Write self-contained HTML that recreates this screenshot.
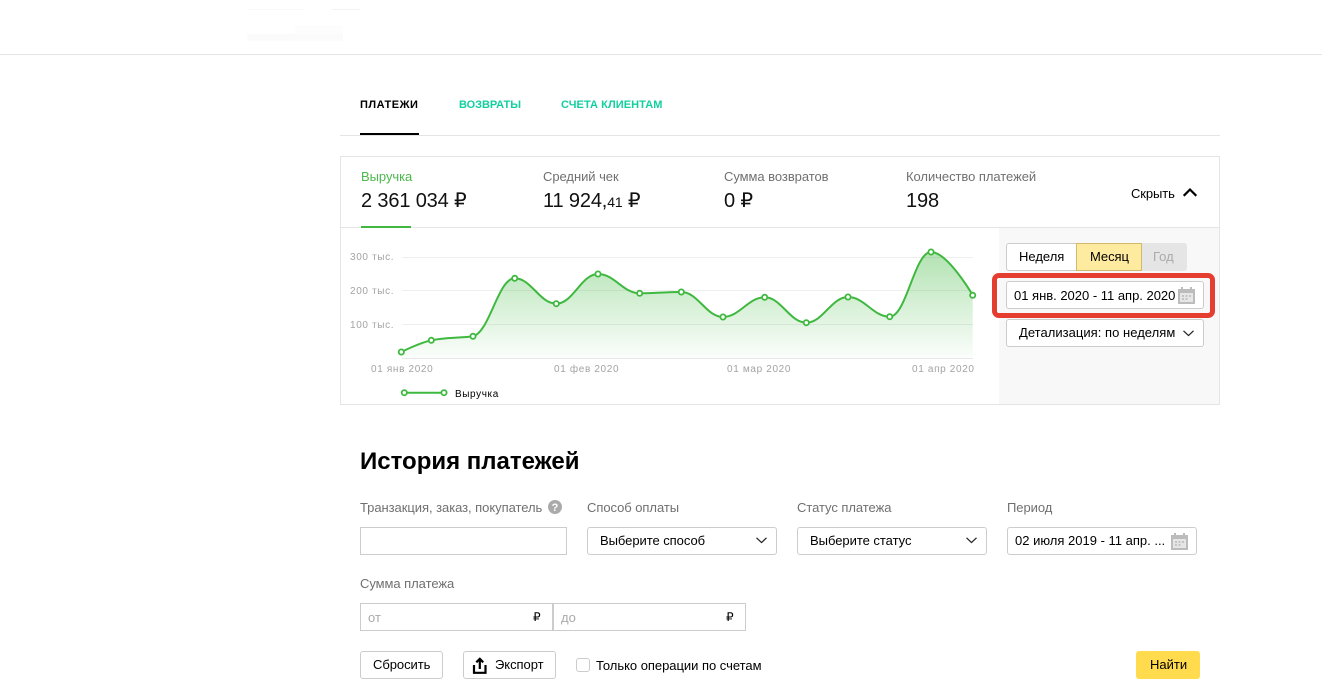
<!DOCTYPE html>
<html lang="ru"><head><meta charset="utf-8"><title>Платежи</title>
<style>
html,body{margin:0;padding:0;background:#fff;width:1322px;height:686px;overflow:hidden;font-family:"Liberation Sans",Arial,sans-serif;color:#000}
.a{position:absolute;box-sizing:border-box}
.t{position:absolute;white-space:nowrap;line-height:16px;font-size:13px}
.l{color:#707070;letter-spacing:-.05px}
.v{font-size:20px;line-height:24px;color:#111;letter-spacing:-.15px}
.b{position:absolute;box-sizing:border-box;background:#fff;border:1px solid #ccc;border-radius:3px}
.tab{font-weight:bold;font-size:11px}
.g{color:#12cfa0}
.cl{color:#a3a3a3;font-size:10px;letter-spacing:.65px}
svg{position:absolute;overflow:visible}
</style></head><body>
<div class="a" style="left:247px;top:9px;width:58px;height:1px;background:#f8f8f8"></div>
<div class="a" style="left:332px;top:9px;width:28px;height:1px;background:#f3f3f3"></div>
<div class="a" style="left:295px;top:25px;width:48px;height:16px;background:#fdfdfd"></div>
<div class="a" style="left:247px;top:34px;width:96px;height:7px;background:#fbfbfb"></div>
<div class="a" style="left:0;top:54px;width:1322px;height:1px;background:#e5e5e5"></div>

<div class="t tab" style="left:360px;top:97px;letter-spacing:.5px">ПЛАТЕЖИ</div>
<div class="t tab g" style="left:459px;top:97px;letter-spacing:-.05px">ВОЗВРАТЫ</div>
<div class="t tab g" style="left:561px;top:97px;letter-spacing:.07px">СЧЕТА КЛИЕНТАМ</div>
<div class="a" style="left:340px;top:135px;width:880px;height:1px;background:#e5e5e5"></div>
<div class="a" style="left:360px;top:133px;width:59px;height:2px;background:#000"></div>

<div class="a" style="left:340px;top:156px;width:880px;height:249px;border:1px solid #e5e5e5"></div>
<div class="a" style="left:341px;top:227px;width:878px;height:1px;background:#e5e5e5"></div>
<div class="a" style="left:999px;top:228px;width:220px;height:176px;background:#f8f8f8"></div>
<div class="a" style="left:361px;top:226px;width:50px;height:2px;background:#3fb83f"></div>

<div class="t" style="left:361px;top:169px;color:#4cb84c;letter-spacing:-.05px">Выручка</div>
<div class="t v" style="left:361px;top:189px">2 361 034 ₽</div>
<div class="t l" style="left:543px;top:169px">Средний чек</div>
<div class="t v" style="left:543px;top:189px">11 924,<span style="font-size:14px">41</span> ₽</div>
<div class="t l" style="left:724px;top:169px">Сумма возвратов</div>
<div class="t v" style="left:724px;top:189px">0 ₽</div>
<div class="t l" style="left:906px;top:169px">Количество платежей</div>
<div class="t v" style="left:906px;top:189px">198</div>
<div class="t" style="left:1131px;top:186px;font-size:13px;letter-spacing:-.1px">Скрыть</div>
<svg style="left:1183px;top:188px" width="14" height="9"><path d="M0.7 7.8L7 1.5L13.3 7.8" fill="none" stroke="#000" stroke-width="2.2"/></svg>

<svg style="left:0;top:0" width="1000" height="405">
<defs><linearGradient id="f" x1="0" y1="252" x2="0" y2="358" gradientUnits="userSpaceOnUse"><stop offset="0" stop-color="#3fb83f" stop-opacity=".4"/><stop offset="1" stop-color="#3fb83f" stop-opacity=".02"/></linearGradient></defs>
<g fill="none" stroke="#eeeeee" stroke-width="1"><path d="M402 257.5H973M402 290.5H973M402 324.5H973"/><path d="M402 358.5H973" stroke="#e8e8e8"/></g>
<path d="M401.3 352C401.3 352 419.3 342.9 431.3 340.3C448 337 456.3 338.5 473 336.3C489.7 332.3 498 278.3 514.7 278.3C531.4 278.3 539.6 303.7 556.3 303.7C573 303.7 581.3 274 598 274C614.7 274 623 293.3 639.7 293.3C656.4 293.3 664.6 292 681.3 292C698 292 706.3 317 723 317C739.7 317 748 297.3 764.7 297.3C781.4 297.3 789.6 322.7 806.3 322.7C823 322.7 831.3 297 848 297C864.7 297 873 316.7 889.7 316.7C906.4 316.7 914.5 252 931 252C947.7 252 972.7 295.3 972.7 295.3V358H401.3Z" fill="url(#f)"/>
<path d="M401.3 352C401.3 352 419.3 342.9 431.3 340.3C448 337 456.3 338.5 473 336.3C489.7 332.3 498 278.3 514.7 278.3C531.4 278.3 539.6 303.7 556.3 303.7C573 303.7 581.3 274 598 274C614.7 274 623 293.3 639.7 293.3C656.4 293.3 664.6 292 681.3 292C698 292 706.3 317 723 317C739.7 317 748 297.3 764.7 297.3C781.4 297.3 789.6 322.7 806.3 322.7C823 322.7 831.3 297 848 297C864.7 297 873 316.7 889.7 316.7C906.4 316.7 914.5 252 931 252C947.7 252 972.7 295.3 972.7 295.3" fill="none" stroke="#3fb83f" stroke-width="2"/>
<g fill="#fff" stroke="#3fb83f" stroke-width="1.8">
<circle cx="401.3" cy="352" r="2.6"/><circle cx="431.3" cy="340.3" r="2.6"/><circle cx="473" cy="336.3" r="2.6"/><circle cx="514.7" cy="278.3" r="2.6"/><circle cx="556.3" cy="303.7" r="2.6"/><circle cx="598" cy="274" r="2.6"/><circle cx="639.7" cy="293.3" r="2.6"/><circle cx="681.3" cy="292" r="2.6"/><circle cx="723" cy="317" r="2.6"/><circle cx="764.7" cy="297.3" r="2.6"/><circle cx="806.3" cy="322.7" r="2.6"/><circle cx="848" cy="297" r="2.6"/><circle cx="889.7" cy="316.7" r="2.6"/><circle cx="931" cy="252" r="2.6"/><circle cx="972.7" cy="295.3" r="2.6"/>
</g>
<path d="M404 392.7H444" stroke="#3fb83f" stroke-width="2"/>
<g fill="#fff" stroke="#3fb83f" stroke-width="1.8"><circle cx="404.3" cy="392.7" r="2.6"/><circle cx="444" cy="392.7" r="2.6"/></g>
</svg>
<div class="t cl" style="left:350px;top:250px">300 тыс.</div>
<div class="t cl" style="left:350px;top:284px">200 тыс.</div>
<div class="t cl" style="left:350px;top:318px">100 тыс.</div>
<div class="t cl" style="left:371px;top:362px">01 янв 2020</div>
<div class="t cl" style="left:554px;top:362px">01 фев 2020</div>
<div class="t cl" style="left:727px;top:362px">01 мар 2020</div>
<div class="t cl" style="left:912px;top:362px">01 апр 2020</div>
<div class="t" style="left:455px;top:387px;font-size:10px;letter-spacing:.6px">Выручка</div>

<div class="a" style="left:1142px;top:243px;width:45px;height:28px;background:#e5e5e5;border-radius:0 3px 3px 0"></div>
<div class="b" style="left:1006px;top:243px;width:71px;height:28px;border-radius:3px 0 0 3px"></div>
<div class="a" style="left:1076px;top:243px;width:66px;height:28px;background:#ffeba0;border:1px solid #d3b96b"></div>
<div class="t" style="left:1019px;top:249px">Неделя</div>
<div class="t" style="left:1090px;top:249px;letter-spacing:-.05px">Месяц</div>
<div class="t" style="left:1153px;top:249px;color:#aaa">Год</div>

<div class="a" style="left:992px;top:273px;width:223px;height:45px;border:5px solid #e53d30;border-radius:7px"></div>
<div class="b" style="left:1006px;top:281px;width:198px;height:28px"></div>
<div class="t" style="left:1014px;top:288px;letter-spacing:-.01px">01 янв. 2020 - 11 апр. 2020</div>
<svg style="left:1178px;top:287px" width="17" height="17"><path d="M0 2H3V0H5V2H12V0H14V2H17V17H0Z" fill="#bcbcbc"/><rect x="2" y="6" width="13" height="9" fill="#e6e6e6"/><path d="M4 8h2v2H4zM7.5 8h2v2h-2zM11 8h2v2h-2zM4 11h2v2H4zM7.5 11h2v2h-2z" fill="#c4c4c4"/></svg>
<div class="b" style="left:1006px;top:319px;width:198px;height:28px"></div>
<div class="t" style="left:1019px;top:325px;letter-spacing:.03px">Детализация: по неделям</div>
<svg style="left:1183px;top:330px" width="11" height="7"><path d="M0.5 0.8L5.5 5.6L10.5 0.8" fill="none" stroke="#222" stroke-width="1.2"/></svg>

<div class="t" style="left:360px;top:450px;font-size:24px;line-height:24px;font-weight:bold">История платежей</div>

<div class="t l" style="left:360px;top:500px">Транзакция, заказ, покупатель</div>
<svg style="left:548px;top:500px" width="14" height="14"><circle cx="7" cy="7" r="7" fill="#aaa"/><text x="7" y="11" font-family="Liberation Sans,sans-serif" font-size="11" font-weight="bold" fill="#fff" text-anchor="middle">?</text></svg>
<div class="t l" style="left:587px;top:500px">Способ оплаты</div>
<div class="t l" style="left:797px;top:500px">Статус платежа</div>
<div class="t l" style="left:1007px;top:500px">Период</div>

<div class="a" style="left:360px;top:527px;width:207px;height:28px;border:1px solid #ccc"></div>
<div class="b" style="left:587px;top:527px;width:190px;height:28px"></div>
<div class="t" style="left:600px;top:533px;letter-spacing:-.05px">Выберите способ</div>
<svg style="left:756px;top:537px" width="11" height="7"><path d="M0.5 0.8L5.5 5.6L10.5 0.8" fill="none" stroke="#222" stroke-width="1.2"/></svg>
<div class="b" style="left:797px;top:527px;width:190px;height:28px"></div>
<div class="t" style="left:810px;top:533px;letter-spacing:-.03px">Выберите статус</div>
<svg style="left:966px;top:537px" width="11" height="7"><path d="M0.5 0.8L5.5 5.6L10.5 0.8" fill="none" stroke="#222" stroke-width="1.2"/></svg>
<div class="b" style="left:1007px;top:527px;width:190px;height:28px"></div>
<div class="t" style="left:1015px;top:533px;letter-spacing:0">02 июля 2019 - 11 апр. ...</div>
<svg style="left:1171px;top:533px" width="17" height="17"><path d="M0 2H3V0H5V2H12V0H14V2H17V17H0Z" fill="#bcbcbc"/><rect x="2" y="6" width="13" height="9" fill="#e6e6e6"/><path d="M4 8h2v2H4zM7.5 8h2v2h-2zM11 8h2v2h-2zM4 11h2v2H4zM7.5 11h2v2h-2z" fill="#c4c4c4"/></svg>

<div class="t l" style="left:360px;top:576px">Сумма платежа</div>
<div class="a" style="left:360px;top:603px;width:193px;height:28px;border:1px solid #ccc"></div>
<div class="a" style="left:553px;top:603px;width:193px;height:28px;border:1px solid #ccc"></div>
<div class="t" style="left:368px;top:610px;color:#aaa">от</div>
<div class="t" style="left:561px;top:610px;color:#aaa">до</div>
<div class="t" style="left:533px;top:609px;font-size:12px">₽</div>
<div class="t" style="left:726px;top:609px;font-size:12px">₽</div>

<div class="b" style="left:360px;top:651px;width:83px;height:28px"></div>
<div class="t" style="left:373px;top:657px;letter-spacing:-.05px">Сбросить</div>
<div class="b" style="left:463px;top:651px;width:93px;height:28px"></div>
<svg style="left:473px;top:657px" width="14" height="17"><path d="M1 8V15.8H12.5V8M6.8 12V2M3.3 5.3L6.8 1.8L10.2 5.3" fill="none" stroke="#000" stroke-width="2.2"/></svg>
<div class="t" style="left:495px;top:657px;letter-spacing:-.05px">Экспорт</div>
<div class="a" style="left:576px;top:658px;width:14px;height:14px;border:1px solid #ccc;border-radius:3px;background:#fff"></div>
<div class="t" style="left:596px;top:658px;letter-spacing:-.03px">Только операции по счетам</div>
<div class="a" style="left:1136px;top:651px;width:64px;height:28px;background:#ffdb4d;border-radius:3px"></div>
<div class="t" style="left:1150px;top:657px">Найти</div>
</body></html>
